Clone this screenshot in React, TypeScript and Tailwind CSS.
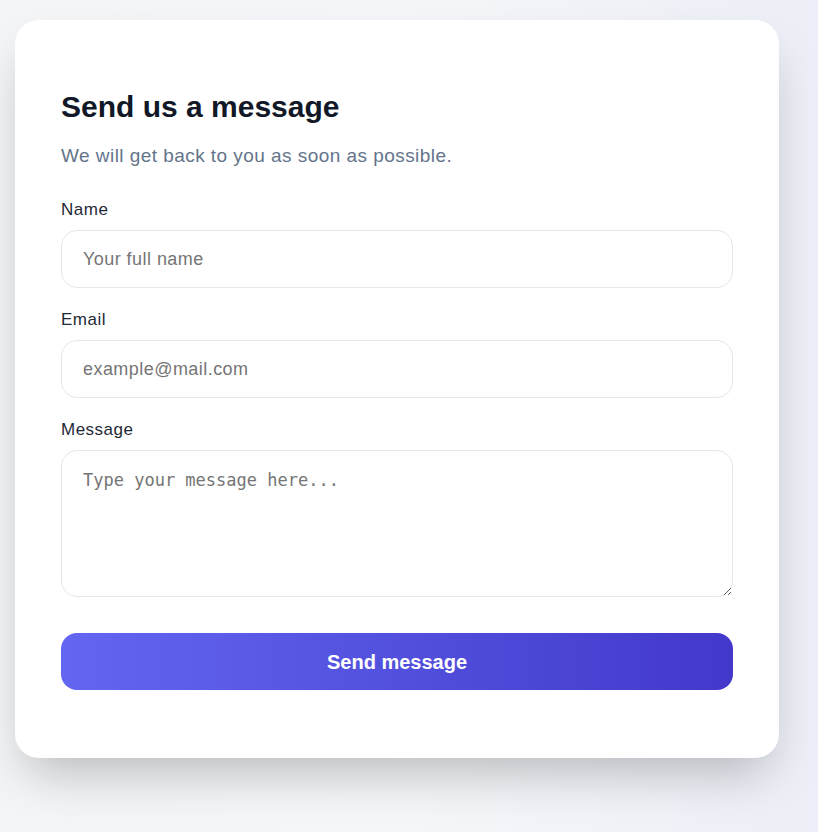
import { useState } from 'react';

export default function App() {
  const [name, setName] = useState('');
  const [email, setEmail] = useState('');
  const [message, setMessage] = useState('');

  return (
    <div className="min-h-[832px] bg-gradient-to-r from-[#f4f5f7] via-[#f5f6f9] to-[#eceff7] pt-5 pl-[15px] font-['Liberation_Sans',Arial,sans-serif]">
      <div className="w-[764px] rounded-3xl bg-white px-[46px] pt-[69px] pb-[68px] shadow-[0_25px_50px_-12px_rgba(0,0,0,0.25)]">
        {/* Header */}
        <h2 className="text-3xl font-bold text-[#111827]">Send us a message</h2>
        <p className="mt-[17px] text-[19px] leading-7 tracking-[0.45px] text-[#64748b]">
          We will get back to you as soon as possible.
        </p>

        <form
          className="mt-7 flex flex-col gap-5"
          onSubmit={(e) => e.preventDefault()}
        >
          <div>
            <label className="mb-2 block text-[17px] leading-6 tracking-[0.5px] text-[#1f2937]">Name</label>
            <input
              type="text"
              value={name}
              onChange={(e) => setName(e.target.value)}
              placeholder="Your full name"
              className="block h-[58px] w-full rounded-2xl border border-[#e5e7eb] px-[21px] text-lg tracking-[0.45px] text-[#111827] outline-none placeholder:text-[#757575]"
            />
          </div>

          <div>
            <label className="mb-2 block text-[17px] leading-6 tracking-[0.5px] text-[#1f2937]">Email</label>
            <input
              type="email"
              value={email}
              onChange={(e) => setEmail(e.target.value)}
              placeholder="example@mail.com"
              className="block h-[58px] w-full rounded-2xl border border-[#e5e7eb] px-[21px] text-lg tracking-[0.45px] text-[#111827] outline-none placeholder:text-[#757575]"
            />
          </div>

          <div>
            <label className="mb-2 block text-[17px] leading-6 tracking-[0.5px] text-[#1f2937]">Message</label>
            <textarea
              value={message}
              onChange={(e) => setMessage(e.target.value)}
              placeholder="Type your message here..."
              className="block h-[147px] w-full rounded-2xl border border-[#e5e7eb] px-[21px] py-[17px] font-['DejaVu_Sans_Mono',monospace] text-[17px] leading-6 text-[#111827] outline-none placeholder:text-[#757575]"
            />
          </div>

          <button
            type="submit"
            className="mt-4 h-[57px] w-full rounded-2xl bg-gradient-to-r from-[#6366f1] to-[#4338ca] text-xl font-bold text-white"
          >
            Send message
          </button>
        </form>
      </div>
    </div>
  );
}
